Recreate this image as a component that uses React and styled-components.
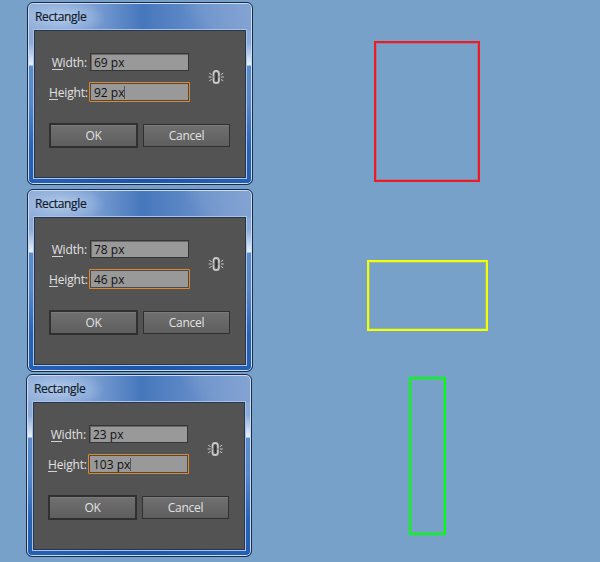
import styled, { createGlobalStyle } from 'styled-components';

const GlobalStyle = createGlobalStyle`
  *, *::before, *::after {
    box-sizing: border-box;
  }

  body {
    margin: 0;
    background: #77a1c8;
  }
`;

const Page = styled.main`
  display: flex;
  width: 600px;
  height: 562px;
  overflow: hidden;
  background: #77a1c8;
`;

const DialogColumn = styled.div`
  display: flex;
  flex-direction: column;
  width: 254px;
  padding: 2px 0 0 27px;
`;

const ShapeColumn = styled.div`
  display: flex;
  flex: 1;
  flex-direction: column;
  align-items: center;
  padding-top: 41px;
`;

const Window = styled.section`
  display: flex;
  flex-direction: column;
  width: 226px;
  height: 183px;
  margin: 0 0 ${({ $gap }) => $gap}px ${({ $shift }) => $shift}px;
  padding: 0 6px 6px;
  border: 1px solid #1b2c4b;
  border-radius: 6px;
  box-shadow: inset 0 0 0 1px #c9dcf3;
  background:
    radial-gradient(ellipse 46px 18px at 32px 14px, #b4cbe9 0%, #a5c0e4aa 50%, transparent 100%) no-repeat 0 0 / 100% 28px,
    linear-gradient(60deg, transparent 70%, #8ba9d455 78%, #8ba9d488 100%) no-repeat 0 0 / 100% 28px,
    linear-gradient(90deg, #8fadd9 0%, #7da0d4 28%, #4677bc 51%, #5f89c7 72%, #7b9dd0 100%) no-repeat 0 0 / 100% 28px,
    linear-gradient(90deg, transparent 12%, #1c55a9 50%, transparent 88%) no-repeat 0 100% / 100% 7px,
    linear-gradient(180deg, #86a7d6 0, #8babd8 40px, #e8f1fc 62px, #5b8ccb 63px, #5788ca 100px, #2862b5 145px, #235eb2 100%);
`;

const TitleBar = styled.header`
  height: 27px;
  padding: 5px 0 0 1px;
  color: #101b2c;
  font: 12px/17px 'Open Sans', 'Noto Sans', sans-serif;
  letter-spacing: -0.35px;
  -webkit-text-stroke: 0.2px;
`;

const Body = styled.div`
  flex: 1;
  padding: 21px 0 0 14px;
  border: 1px solid #26364f;
  box-shadow: 0 0 0 1px #a9c4e8;
  background: #535353;
`;

const Fields = styled.div`
  display: flex;
  align-items: center;
  height: 50px;
`;

const FieldList = styled.div`
  display: grid;
  gap: 10px;
  width: 142px;
`;

const Field = styled.label`
  display: flex;
  align-items: center;
  height: 20px;
  color: #e2e2e2;
  font: 12px/18px 'Open Sans', 'Noto Sans', sans-serif;
`;

const Caption = styled.span`
  width: 40px;
  padding: 1px 2px 0 0;
  text-align: right;
  white-space: nowrap;
  letter-spacing: -0.15px;
`;

const Underlined = styled.span`
  border-bottom: 1px solid #d2d2d2;
  display: inline-block;
  height: 15px;
  line-height: 15px;
`;

const Value = styled.span`
  display: flex;
  align-items: center;
  width: ${({ $active }) => ($active ? 101 : 99)}px;
  height: ${({ $active }) => ($active ? 20 : 18)}px;
  margin-left: ${({ $active }) => ($active ? 0 : 1)}px;
  padding: 1px 0 0 ${({ $active }) => ($active ? 4 : 3)}px;
  flex: none;
  border: 1px solid ${({ $active }) => ($active ? '#e0892a' : '#363636')};
  border-radius: ${({ $active }) => ($active ? 1 : 0)}px;
  box-shadow: ${({ $active }) => ($active ? 'inset 0 0 0 1px #4b4a49' : 'inset 1px 1px 0 #686868')};
  background: #999;
  color: #111;
`;

const Caret = styled.span`
  width: 1px;
  height: 13px;
  background: #555;
`;

const LinkIcon = styled.svg`
  width: 17px;
  height: 16px;
  margin-left: 17px;
`;

const Buttons = styled.div`
  display: flex;
  align-items: center;
  gap: 5px;
  margin-top: 21px;
`;

const Button = styled.button`
  width: ${({ $primary }) => ($primary ? 89 : 87)}px;
  height: ${({ $primary }) => ($primary ? 25 : 23)}px;
  padding: 1px 0 0;
  border: ${({ $primary }) => ($primary ? 2 : 1)}px solid #303030;
  box-shadow: inset 0 1px 0 #7b7b7b;
  background: linear-gradient(#707070, #5e5e5e);
  color: #e2e2e2;
  font: 12px/18px 'Open Sans', 'Noto Sans', sans-serif;
  letter-spacing: -0.25px;
`;

const Outline = styled.div`
  width: ${({ $width }) => $width}px;
  height: ${({ $height }) => $height}px;
  margin-bottom: ${({ $gap }) => $gap}px;
  border: 2px solid ${({ $color }) => $color};
  box-shadow: inset 0 0 0 1px ${({ $color }) => $color}40;
`;

const dialogs = [
  { width: '69 px', height: '92 px', caret: true, gap: 4, shift: 0 },
  { width: '78 px', height: '46 px', caret: false, gap: 2, shift: 0 },
  { width: '23 px', height: '103 px', caret: true, gap: 0, shift: -1 },
];

const shapes = [
  { color: '#ed1c24', width: 106, height: 141, gap: 78 },
  { color: '#f4ff00', width: 121, height: 71, gap: 46 },
  { color: '#00ff0c', width: 37, height: 158, gap: 0 },
];

const BrokenLink = () => (
  <LinkIcon viewBox="0 0 17 16" fill="none" stroke="#c8c8c8">
    <rect x="5.5" y="2" width="5.4" height="12" rx="2.6" strokeWidth="1.8" />
    <path d="M4.8 8h1.8M9.8 8h2" stroke="#777" strokeWidth="1.2" />
    <path d="M8.2 4.6v6.8" stroke="#303030" strokeWidth="1.4" />
    <path d="M.6 8h3M12.8 8h3M1.2 4.2l2.4 1.4M15.2 4.2l-2.4 1.4M1.2 11.8l2.4-1.4M15.2 11.8l-2.4-1.4" />
  </LinkIcon>
);

const RectangleDialog = ({
  width, height, caret, gap, shift,
}) => (
  <Window $gap={gap} $shift={shift}>
    <TitleBar>Rectangle</TitleBar>
    <Body>
      <Fields>
        <FieldList>
          <Field>
            <Caption>
              <Underlined>W</Underlined>
              idth:
            </Caption>
            <Value>{width}</Value>
          </Field>
          <Field>
            <Caption>
              <Underlined>H</Underlined>
              eight:
            </Caption>
            <Value $active>
              {height}
              {caret && <Caret />}
            </Value>
          </Field>
        </FieldList>
        <BrokenLink />
      </Fields>
      <Buttons>
        <Button $primary>OK</Button>
        <Button>Cancel</Button>
      </Buttons>
    </Body>
  </Window>
);

const App = () => (
  <>
    <GlobalStyle />
    <Page>
      <DialogColumn>
        {dialogs.map((dialog) => (
          <RectangleDialog
            key={dialog.width}
            width={dialog.width}
            height={dialog.height}
            caret={dialog.caret}
            gap={dialog.gap}
            shift={dialog.shift}
          />
        ))}
      </DialogColumn>
      <ShapeColumn>
        {shapes.map((shape) => (
          <Outline
            key={shape.color}
            $color={shape.color}
            $width={shape.width}
            $height={shape.height}
            $gap={shape.gap}
          />
        ))}
      </ShapeColumn>
    </Page>
  </>
);

export default App;
